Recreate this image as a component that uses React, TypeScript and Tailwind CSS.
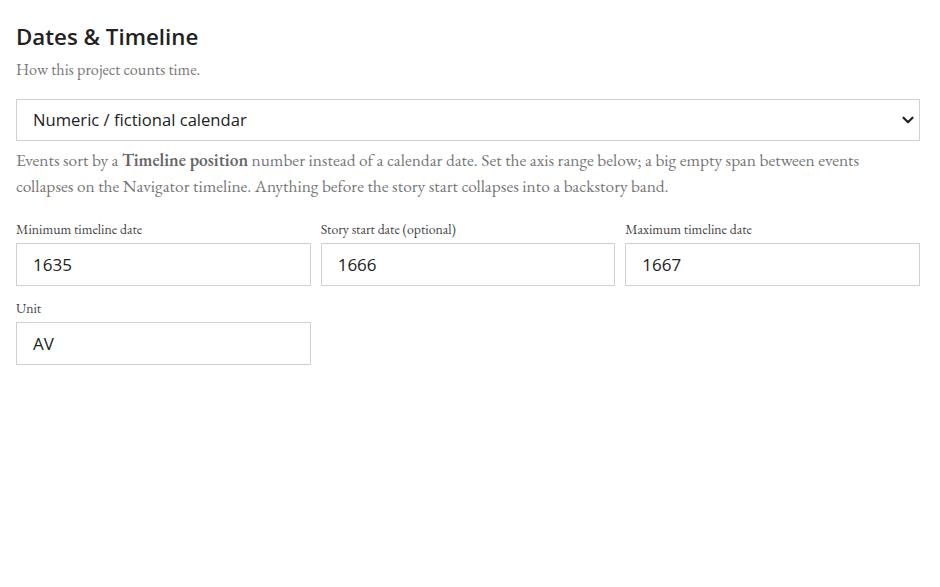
import { ChevronDown } from "lucide-react";

const sans = "font-['Segoe_UI','Open_Sans','Noto_Sans',sans-serif]";
const serif = "font-['EB_Garamond','Liberation_Serif',serif]";

const Field = ({ label, value }: { label: string; value: string }) => (
  <div className="flex flex-col">
    <label className={`${serif} text-[13.8px] leading-[18px] text-[#444] mb-[5px]`}>{label}</label>
    <input
      readOnly
      value={value}
      className={`${sans} h-[43px] border border-[#d0d0d0] bg-white px-4 text-[17px] text-[#222] outline-none`}
    />
  </div>
);

export default function App() {
  return (
    <div className="min-h-[587px] w-[940px] bg-white pl-4 pr-5 pt-[22px]">
      <h1 className={`${sans} text-[22.3px] font-semibold leading-[30px] text-[#222]`}>Dates &amp; Timeline</h1>
      <p className={`${serif} mt-[8px] text-[16.2px] leading-[20px] text-[#777]`}>How this project counts time.</p>

      {/* calendar mode select */}
      <div className="mt-[19px]">
        <div
          className={`${sans} flex h-[42px] items-center border border-[#d0d0d0] bg-white pl-4 pr-[2px] text-[16.6px] text-[#222]`}
        >
          <span className="flex-1">Numeric / fictional calendar</span>
          <ChevronDown className="h-[18px] w-[18px] text-[#222]" strokeWidth={3} />
        </div>
      </div>

      <p className={`${serif} mt-[6px] max-w-[880px] text-[17.4px] leading-[26px] text-[#777]`}>
        Events sort by a <strong className="font-semibold text-[#666]">Timeline position</strong> number instead of
        a calendar date. Set the axis range below; a big empty span between events collapses on the Navigator
        timeline. Anything before the story start collapses into a backstory band.
      </p>

      <div className="mt-[21px] grid grid-cols-3 gap-[10px]">
        <Field label="Minimum timeline date" value="1635" />
        <Field label="Story start date (optional)" value="1666" />
        <Field label="Maximum timeline date" value="1667" />
      </div>

      <div className="mt-[13px] grid grid-cols-3 gap-[10px]">
        <Field label="Unit" value="AV" />
      </div>
    </div>
  );
}
